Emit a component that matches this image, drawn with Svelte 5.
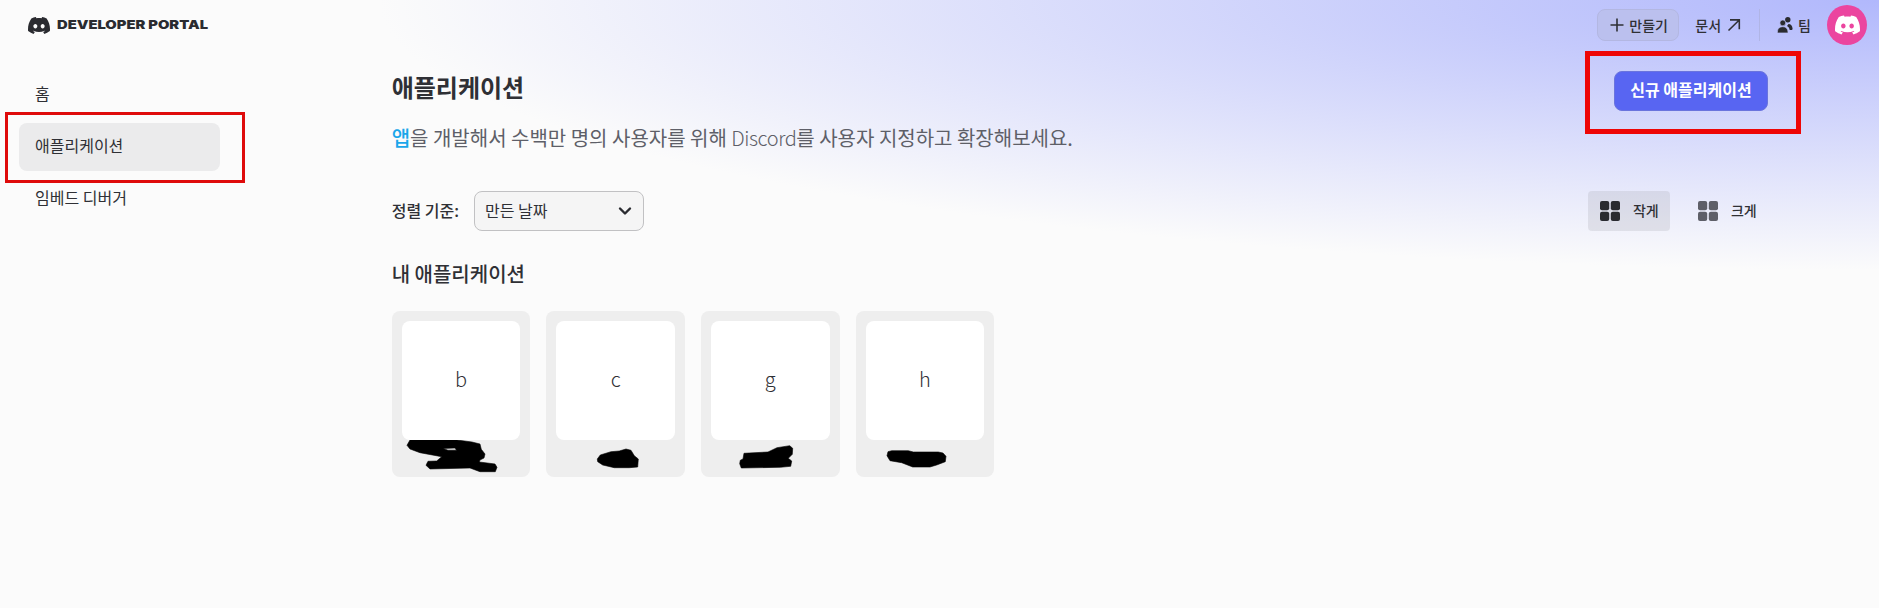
<script>
  const menu = [
    { label: '홈', active: false },
    { label: '애플리케이션', active: true },
    { label: '임베드 디버거', active: false }
  ];

  const apps = [
    {
      letter: 'b',
      mark: 'M18 0L65 0L80 2L88 4L89.3 9.3L93 14L92 18L88 20L87.3 22L103 24L105 27.3L103.3 31.7L88 31.7L78 28L38 29L34 25.3L36 21.3L44.7 21L49.7 16.7L28 12.7L18 9L15 5.3ZM51 8.5L56 10.2L64.5 10.2L63 8Z'
    },
    {
      letter: 'c',
      mark: 'M51.3 19L54.3 15L65 11.7L73.3 11L80 9L85 10.3L88.3 15.7L92.3 19L91.7 27L83.3 27.7L68.3 27.7L56.7 25L51.7 21.7Z'
    },
    {
      letter: 'g',
      mark: 'M38.7 23.7L39.3 20.3L42 19L43 13.3L67 12L76 7.7L88.7 5.7L91.7 8.3L91.3 14.3L87.3 18.3L90.7 21L89.7 26.3L79.3 27.3L40.3 28Z'
    },
    {
      letter: 'h',
      mark: 'M31 15.7L32 11.7L35.7 10.7L52.3 10.7L57.3 12L82.3 12L87 13L90 16.3L89.3 21.7L80.7 25L74 27L56.7 27L45.7 22.7L34 20.7Z'
    }
  ];

  let size = 'small';
</script>

{#snippet discord()}
  <path d="M20.317 4.3698a19.7913 19.7913 0 00-4.8851-1.5152.0741.0741 0 00-.0785.0371c-.211.3753-.4447.8648-.6083 1.2495-1.8447-.2762-3.68-.2762-5.4868 0-.1636-.3933-.4058-.8742-.6177-1.2495a.077.077 0 00-.0785-.037 19.7363 19.7363 0 00-4.8852 1.515.0699.0699 0 00-.0321.0277C.5334 9.0458-.319 13.5799.0992 18.0578a.0824.0824 0 00.0312.0561c2.0528 1.5076 4.0413 2.4228 5.9929 3.0294a.0777.0777 0 00.0842-.0276c.4616-.6304.8731-1.2952 1.226-1.9942a.076.076 0 00-.0416-.1057c-.6528-.2476-1.2743-.5495-1.8722-.8923a.077.077 0 01-.0076-.1277c.1258-.0943.2517-.1923.3718-.2914a.0743.0743 0 01.0776-.0105c3.9278 1.7933 8.18 1.7933 12.0614 0a.0739.0739 0 01.0785.0095c.1202.099.246.1981.3728.2924a.077.077 0 01-.0066.1276 12.2986 12.2986 0 01-1.873.8914.0766.0766 0 00-.0407.1067c.3604.698.7719 1.3628 1.225 1.9932a.076.076 0 00.0842.0286c1.961-.6067 3.9495-1.5219 6.0023-3.0294a.077.077 0 00.0313-.0552c.5004-5.177-.8382-9.6739-3.5485-13.6604a.061.061 0 00-.0312-.0286zM8.02 15.3312c-1.1825 0-2.1569-1.0857-2.1569-2.419 0-1.3332.9555-2.4189 2.157-2.4189 1.2108 0 2.1757 1.0952 2.1568 2.419 0 1.3332-.9555 2.4189-2.1569 2.4189zm7.9748 0c-1.1825 0-2.1569-1.0857-2.1569-2.419 0-1.3332.9554-2.4189 2.1569-2.4189 1.2108 0 2.1757 1.0952 2.1568 2.419 0 1.3332-.946 2.4189-2.1568 2.4189Z" />
{/snippet}

{#snippet grid()}
  <svg class="grid-icon" viewBox="0 0 20 20">
    <rect width="9.2" height="9.2" rx="2" />
    <rect x="10.8" width="9.2" height="9.2" rx="2" />
    <rect y="10.8" width="9.2" height="9.2" rx="2" />
    <rect x="10.8" y="10.8" width="9.2" height="9.2" rx="2" />
  </svg>
{/snippet}

<div class="page">
  <header>
    <a class="brand" href="#home">
      <svg class="logo" viewBox="0 2.85 24 18.3">{@render discord()}</svg>
      <svg class="wordmark" viewBox="0 0 152 14">
        <text x="0" y="11.4" textLength="151" lengthAdjust="spacingAndGlyphs">DEVELOPER PORTAL</text>
      </svg>
    </a>
    <nav class="tools">
      <button class="create">
        <svg width="14" height="14" viewBox="0 0 14 14"><path d="M7 .5v13M.5 7h13" /></svg>
        <span>만들기</span>
      </button>
      <a class="docs" href="#docs">
        <span>문서</span>
        <svg width="14" height="14" viewBox="0 0 14 14"><path d="M1.500 12.500L12 2.200M3 1.900h9.300v9.300" /></svg>
      </a>
      <span class="divider"></span>
      <a class="team" href="#team">
        <svg width="16" height="16" viewBox="0 0 16 16">
          <circle cx="10.8" cy="2.8" r="2.7" />
          <path d="M11.500 7c2.400 0 3.900 1.700 4.100 4.800 0 .8-.6 1.2-1.5 1.2h-1.400c-.4-2-1.200-3-2.700-3.900z" />
          <circle class="front" cx="5.800" cy="5.900" r="2.900" />
          <path class="front" d="M.4 15.200c0-3.500 2-5.500 5.300-5.500s5.300 2 5.300 5.500c0 .4-.3.7-.7.700H1.100c-.4 0-.7-.3-.7-.7z" />
        </svg>
        <span>팀</span>
      </a>
      <span class="avatar">
        <svg width="25" height="20" viewBox="0 2.85 24 18.3">{@render discord()}</svg>
      </span>
    </nav>
  </header>

  <div class="body">
    <aside>
      {#each menu as item}
        <a href="#menu" class:active={item.active}>{item.label}</a>
      {/each}
      <span class="mark mark-menu"></span>
    </aside>

    <main>
      <div class="heading">
        <h1>애플리케이션</h1>
        <div class="new">
          <button>신규 애플리케이션</button>
          <span class="mark mark-new"></span>
        </div>
      </div>
      <p class="intro"><a href="#app">앱</a>을 개발해서 수백만 명의 사용자를 위해 <span>Discord</span>를 사용자 지정하고 확장해보세요.</p>

      <div class="controls">
        <span class="sort-label">정렬 기준:</span>
        <button class="select">
          <span>만든 날짜</span>
          <svg width="14" height="10" viewBox="0 0 14 10"><path d="M2 2.500l5 5 5-5" /></svg>
        </button>
        <div class="sizes">
          <button class:active={size === 'small'} on:click={() => (size = 'small')}>{@render grid()}<span>작게</span></button>
          <button class:active={size === 'large'} on:click={() => (size = 'large')}>{@render grid()}<span>크게</span></button>
        </div>
      </div>

      <h2>내 애플리케이션</h2>
      <div class="apps">
        {#each apps as app}
          <div class="card">
            <div class="tile">{app.letter}</div>
            <svg class="scribble" viewBox="0 0 138.67 37"><path fill-rule="evenodd" d={app.mark} /></svg>
          </div>
        {/each}
      </div>
    </main>
  </div>
</div>

<style>
  :global(body) {
    background: #fbfbfb;
  }

  .page {
    height: 608px;
    overflow: hidden;
    color: #2f3035;
    font-family: "Noto Sans CJK KR", sans-serif;
    font-size: 16px;
    line-height: 24px;
    background: radial-gradient(1500px 270px at 100% 0, #b1b8fc 0%, #fbfbfb 100%);
  }

  a {
    color: inherit;
    text-decoration: none;
  }

  button {
    padding: 0;
    border: 0;
    background: none;
    color: inherit;
    font: inherit;
    cursor: pointer;
  }

  svg {
    display: block;
    flex: none;
  }

  header {
    display: flex;
    justify-content: space-between;
    align-items: center;
    height: 50px;
    padding: 0 12px 0 28px;
  }

  .brand {
    display: flex;
    align-items: center;
    gap: 7px;
  }

  .logo {
    width: 22px;
    height: 17px;
    fill: #2a2b30;
  }

  .wordmark {
    width: 152px;
    height: 14px;
    fill: #2a2b30;
    font-family: Inter, sans-serif;
    font-size: 12px;
    font-weight: 900;
  }

  .tools {
    display: flex;
    align-items: center;
    font-size: 14px;
    font-weight: 500;
  }

  .tools span:not([class]), .select span {
    padding-bottom: 2px;
  }

  .create {
    display: flex;
    align-items: center;
    gap: 5px;
    box-sizing: border-box;
    width: 82px;
    height: 32px;
    padding-left: 12px;
    border: 1px solid #b3b7e2;
    border-radius: 8px;
    background: #bbc0ee;
  }

  .create svg, .docs svg {
    fill: none;
    stroke: #2f3035;
    stroke-width: 1.6;
  }

  .docs {
    display: flex;
    align-items: center;
    gap: 6px;
    margin-left: 16px;
  }

  .divider {
    width: 1px;
    height: 32px;
    margin: 0 17px 0 18px;
    background: #b0b5e6;
  }

  .team {
    display: flex;
    align-items: center;
    gap: 5px;
  }

  .team svg {
    fill: #2a2b30;
  }

  .front {
    stroke: #bfc4fb;
    stroke-width: 0.6;
  }

  .avatar {
    display: flex;
    align-items: center;
    justify-content: center;
    width: 40px;
    height: 40px;
    margin-left: 16px;
    border-radius: 50%;
    background: #eb459f;
    fill: #fff;
  }

  .body {
    display: flex;
    gap: 171.66px;
    padding-left: 19px;
  }

  aside {
    position: relative;
    display: flex;
    flex-direction: column;
    gap: 4px;
    width: 201px;
    padding-top: 21px;
  }

  aside a {
    height: 48px;
    padding-left: 16px;
    border-radius: 8px;
    line-height: 44px;
  }

  aside a.active {
    background: #ebebec;
  }

  /* red frames drawn over the page */
  .mark {
    position: absolute;
    box-sizing: border-box;
    pointer-events: none;
  }

  .mark-menu {
    left: -14px;
    top: 62px;
    width: 240px;
    height: 71px;
    border: 3px solid #df0b0b;
  }

  .mark-new {
    left: -29px;
    top: -20px;
    width: 216px;
    height: 83px;
    border: 5px solid #ee0606;
  }

  main {
    width: 1376.34px;
    padding-top: 21px;
  }

  .heading {
    display: flex;
    align-items: center;
    justify-content: space-between;
    height: 40px;
  }

  h1 {
    margin: 0;
    font-size: 24px;
    font-weight: 700;
    line-height: 32px;
    padding-bottom: 8px;
  }

  .new {
    position: relative;
  }

  .new button {
    display: block;
    width: 154px;
    height: 40px;
    padding-bottom: 4px;
    border: 1px solid #6a74dd;
    border-radius: 8px;
    background: #5865f2;
    color: #fff;
    font-weight: 700;
  }

  .intro {
    margin: 12px 0 0;
    color: #5e5f68;
    font-size: 20px;
    line-height: 30px;
  }

  .intro span {
    font-weight: 300;
    letter-spacing: -0.45px;
  }

  .intro a {
    color: #1aa6ea;
    font-weight: 500;
  }

  .controls {
    display: flex;
    align-items: center;
    height: 40px;
    margin-top: 38px;
  }

  .sort-label {
    width: 82.34px;
    padding-bottom: 2px;
    font-weight: 500;
  }

  .select {
    display: flex;
    align-items: center;
    justify-content: space-between;
    box-sizing: border-box;
    width: 170px;
    height: 40px;
    padding: 0 11px 0 10px;
    border: 1px solid #c1c1c3;
    border-radius: 8px;
    background: #f5f5f5;
  }

  .select svg {
    fill: none;
    stroke: #2a2b30;
    stroke-width: 2.4;
    stroke-linecap: round;
    stroke-linejoin: round;
  }

  .sizes {
    display: flex;
    gap: 16px;
    margin-left: auto;
  }

  .sizes button {
    display: flex;
    align-items: center;
    gap: 13px;
    width: 82px;
    height: 40px;
    padding-left: 12px;
    border-radius: 4px;
    font-size: 14px;
    font-weight: 500;
  }

  .sizes span {
    padding-bottom: 2px;
  }

  .sizes button.active {
    background: rgba(151, 151, 159, 0.2);
  }

  .grid-icon {
    width: 20px;
    height: 20px;
    fill: #5e5f68;
  }

  .active .grid-icon {
    fill: #2a2b30;
  }

  h2 {
    margin: 28px 0 23px;
    font-size: 20px;
    font-weight: 500;
    line-height: 29px;
  }

  .apps {
    display: grid;
    grid-template-columns: repeat(4, 138.67px);
    gap: 16px;
  }

  .card {
    box-sizing: border-box;
    height: 166px;
    padding-top: 10px;
    border-radius: 8px;
    background: #eee;
  }

  .tile {
    display: flex;
    align-items: center;
    justify-content: center;
    box-sizing: border-box;
    height: 119px;
    margin: 0 10px;
    padding-bottom: 4px;
    border-radius: 8px;
    background: #fff;
    font-size: 20px;
    font-weight: 300;
  }

  .scribble {
    width: 138.67px;
    height: 37px;
    fill: #000;
    stroke: #000;
    stroke-width: 0.6;
    stroke-linejoin: round;
  }
</style>
